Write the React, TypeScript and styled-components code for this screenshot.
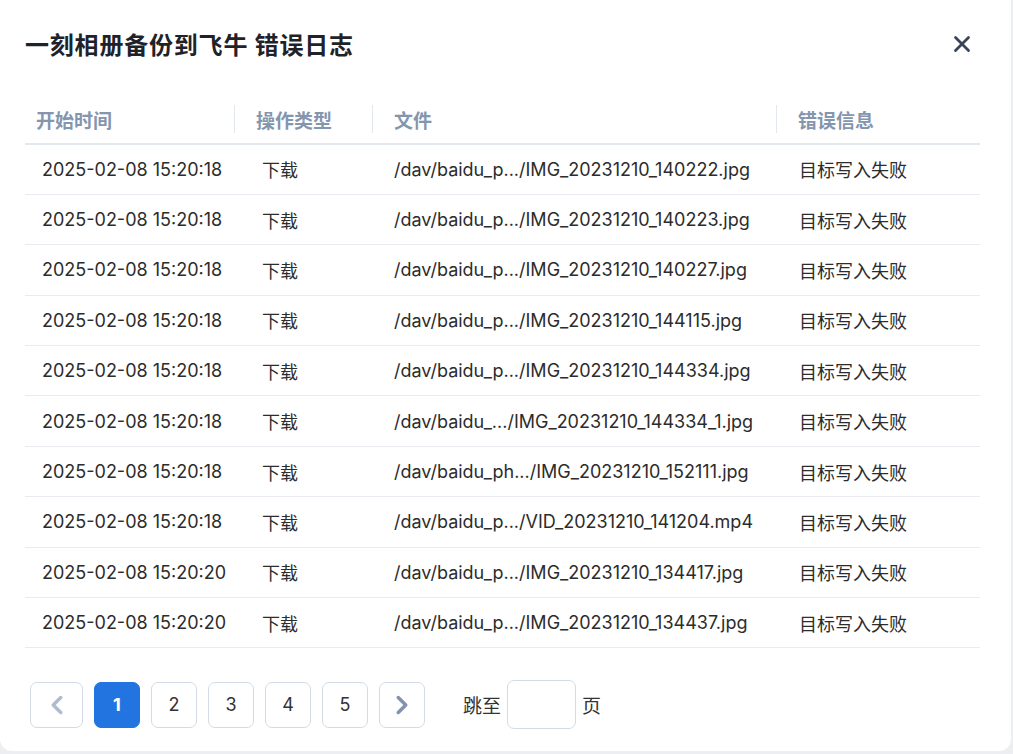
import styled, { createGlobalStyle } from "styled-components";
import { X, ChevronLeft, ChevronRight } from "lucide-react";

type Row = { time: string; kind: string; file: string; error: string };

const rows: Row[] = [
  { time: "2025-02-08 15:20:18", kind: "下载", file: "/dav/baidu_p.../IMG_20231210_140222.jpg", error: "目标写入失败" },
  { time: "2025-02-08 15:20:18", kind: "下载", file: "/dav/baidu_p.../IMG_20231210_140223.jpg", error: "目标写入失败" },
  { time: "2025-02-08 15:20:18", kind: "下载", file: "/dav/baidu_p.../IMG_20231210_140227.jpg", error: "目标写入失败" },
  { time: "2025-02-08 15:20:18", kind: "下载", file: "/dav/baidu_p.../IMG_20231210_144115.jpg", error: "目标写入失败" },
  { time: "2025-02-08 15:20:18", kind: "下载", file: "/dav/baidu_p.../IMG_20231210_144334.jpg", error: "目标写入失败" },
  { time: "2025-02-08 15:20:18", kind: "下载", file: "/dav/baidu_.../IMG_20231210_144334_1.jpg", error: "目标写入失败" },
  { time: "2025-02-08 15:20:18", kind: "下载", file: "/dav/baidu_ph.../IMG_20231210_152111.jpg", error: "目标写入失败" },
  { time: "2025-02-08 15:20:18", kind: "下载", file: "/dav/baidu_p.../VID_20231210_141204.mp4", error: "目标写入失败" },
  { time: "2025-02-08 15:20:20", kind: "下载", file: "/dav/baidu_p.../IMG_20231210_134417.jpg", error: "目标写入失败" },
  { time: "2025-02-08 15:20:20", kind: "下载", file: "/dav/baidu_p.../IMG_20231210_134437.jpg", error: "目标写入失败" },
];

const columns = [
  { title: "开始时间", width: 209, headPad: 11, cellPad: 17 },
  { title: "操作类型", width: 138, headPad: 22, cellPad: 28 },
  { title: "文件", width: 404, headPad: 22, cellPad: 22 },
  { title: "错误信息", width: 204, headPad: 22, cellPad: 23 },
];

const GlobalStyle = createGlobalStyle`
  body {
    margin: 0;
    background: #eceef1;
    font-family: Inter, "Noto Sans CJK SC", sans-serif;
  }
`;

const App = () => {
  return (
    <>
      <GlobalStyle />
      <Modal>
        <Header>
          <Title>一刻相册备份到飞牛 错误日志</Title>
          <CloseButton>
            <X size={26} strokeWidth={2.6} />
          </CloseButton>
        </Header>
        <Table>
          <colgroup>
            {columns.map((c) => (
              <col key={c.title} style={{ width: c.width }} />
            ))}
          </colgroup>
          <thead>
            <tr>
              {columns.map((c, i) => (
                <HeadCell key={c.title} $pad={c.headPad} $divider={i > 0}>
                  {c.title}
                </HeadCell>
              ))}
            </tr>
          </thead>
          <tbody>
            {rows.map((r, i) => (
              <BodyRow key={i}>
                <Cell $pad={columns[0].cellPad}>{r.time}</Cell>
                <Cell $pad={columns[1].cellPad}>{r.kind}</Cell>
                <Cell $pad={columns[2].cellPad}>{r.file}</Cell>
                <Cell $pad={columns[3].cellPad}>{r.error}</Cell>
              </BodyRow>
            ))}
          </tbody>
        </Table>
        <Pager>
          <PageButton $disabled $wide>
            <ChevronLeft size={30} strokeWidth={2.8} />
          </PageButton>
          {[1, 2, 3, 4, 5].map((n) => (
            <PageButton key={n} $active={n === 1}>
              {n}
            </PageButton>
          ))}
          <PageButton>
            <ChevronRight size={30} strokeWidth={2.8} />
          </PageButton>
          <Jump>
            跳至
            <JumpInput />
            页
          </Jump>
        </Pager>
      </Modal>
    </>
  );
};

const Modal = styled.div`
  width: 1011px;
  height: 751px;
  box-sizing: border-box;
  background: #fff;
  border-radius: 0 0 12px 12px;
  padding: 26px 31px 0 25px;
  display: flex;
  flex-direction: column;
`;

const Header = styled.div`
  display: flex;
  align-items: center;
  justify-content: space-between;
  height: 34px;
`;

const Title = styled.h1`
  margin: 0;
  font-size: 24px;
  font-weight: 700;
  color: #1f2329;
  letter-spacing: 0.8px;
`;

const CloseButton = styled.button`
  border: none;
  background: none;
  padding: 0;
  margin-right: 5px;
  margin-top: 2px;
  display: flex;
  color: #3b4558;
  cursor: pointer;
`;

const Table = styled.table`
  margin-top: 35px;
  width: 955px;
  table-layout: fixed;
  border-collapse: collapse;
`;

const HeadCell = styled.th<{ $pad: number; $divider?: boolean }>`
  height: 48px;
  padding: 0 0 0 ${(p) => p.$pad}px;
  text-align: left;
  font-size: 19px;
  font-weight: 700;
  color: #8495ae;
  border-bottom: 2px solid #e3e8ef;
  background: ${(p) =>
    p.$divider
      ? "linear-gradient(#e3e8ef, #e3e8ef) left center / 1px 28px no-repeat"
      : "none"};
`;

const BodyRow = styled.tr`
  height: 50.4px;
  border-bottom: 1px solid #e8ebf0;
`;

const Cell = styled.td<{ $pad: number }>`
  padding: 0 0 0 ${(p) => p.$pad}px;
  font-size: 18px;
  color: #2c2c2c;
  white-space: nowrap;
  overflow: hidden;
`;

const Pager = styled.div`
  display: flex;
  align-items: center;
  gap: 11px;
  margin-top: 32px;
  padding-left: 5px;
`;

const PageButton = styled.button<{
  $active?: boolean;
  $disabled?: boolean;
  $wide?: boolean;
}>`
  width: ${(p) => (p.$wide ? 53 : 46)}px;
  height: 46px;
  box-sizing: border-box;
  display: flex;
  align-items: center;
  justify-content: center;
  border-radius: 7px;
  border: 1px solid ${(p) => (p.$active ? "#2275e0" : "#d3dbe6")};
  background: ${(p) => (p.$active ? "#2275e0" : "#fff")};
  color: ${(p) => (p.$active ? "#fff" : "#333")};
  font-family: Inter, sans-serif;
  font-size: 18px;
  font-weight: ${(p) => (p.$active ? 700 : 400)};
  padding: 0;
  cursor: pointer;

  svg {
    color: ${(p) => (p.$disabled ? "#aebcd0" : "#8193ae")};
  }
`;

const Jump = styled.div`
  display: flex;
  align-items: center;
  gap: 6px;
  margin-left: 27px;
  font-size: 19px;
  color: #333;
`;

const JumpInput = styled.input`
  width: 69px;
  height: 49px;
  box-sizing: border-box;
  border: 1px solid #d3dbe6;
  border-radius: 7px;
  outline: none;
`;

export default App;
